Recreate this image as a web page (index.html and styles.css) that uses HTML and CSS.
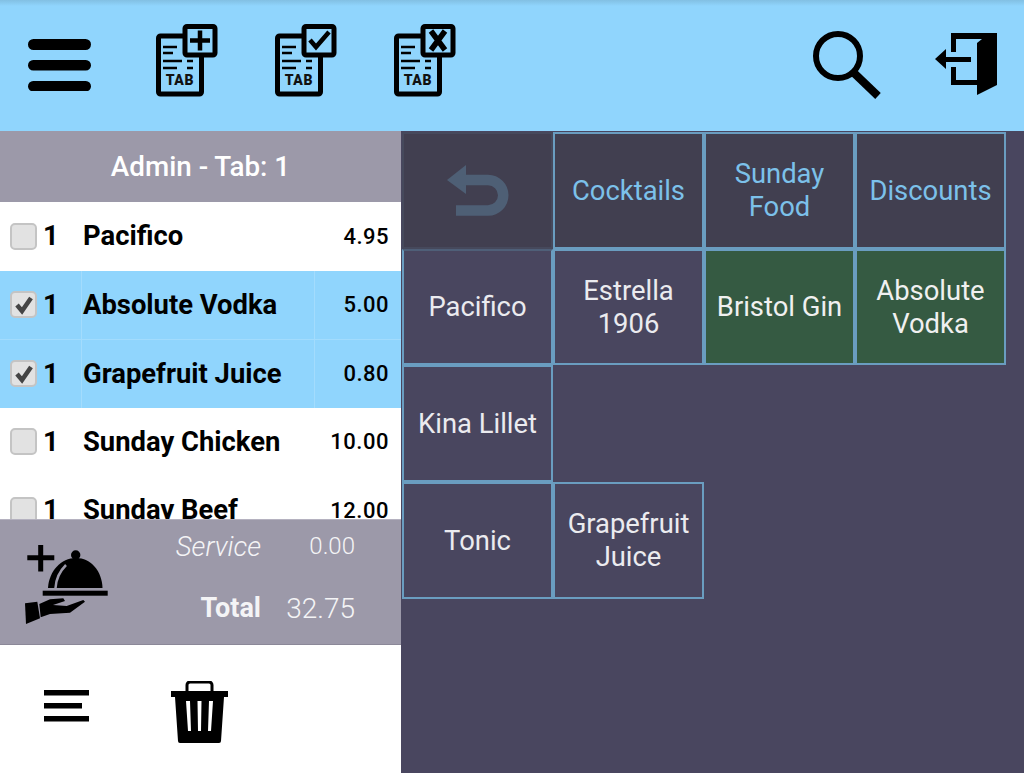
FILE: index.html
```html
<!DOCTYPE html>
<html lang="en">
<head>
  <meta charset="UTF-8" />
  <meta name="viewport" content="width=device-width, initial-scale=1" />
  <title>Tab 1</title>
  <link rel="stylesheet" href="styles.css">
</head>
<body>
  <header class="topbar">
    <svg class="icon-menu" width="63" height="52" viewBox="0 0 63 52" aria-label="Menu">
      <rect x="0" y="0" width="63" height="11" rx="5.5"/>
      <rect x="0" y="21" width="63" height="10.500" rx="5.2"/>
      <rect x="0" y="42" width="63" height="10.500" rx="5.2"/>
    </svg>

    <div class="tab-tools">
      <svg class="icon-tab" width="62" height="73" viewBox="0 0 62 73" aria-label="New tab">
        <rect class="tab-doc" x="2.500" y="12" width="43" height="58" rx="2"/>
        <path class="tab-lines" d="M7 23h14M7 29h10M7 37h19M31 37h6M7 44h14M31 44h6"/>
        <text class="tab-word" x="24" y="61">TAB</text>
        <rect class="tab-box" x="29" y="2.500" width="30" height="28.500" rx="2"/>
        <path class="tab-mark" d="M44 6.500v20M34 16.500h20"/>
      </svg>
      <svg class="icon-tab" width="62" height="73" viewBox="0 0 62 73" aria-label="Close tab">
        <rect class="tab-doc" x="2.500" y="12" width="43" height="58" rx="2"/>
        <path class="tab-lines" d="M7 23h14M7 29h10M7 37h19M31 37h6M7 44h14M31 44h6"/>
        <text class="tab-word" x="24" y="61">TAB</text>
        <rect class="tab-box" x="29" y="2.500" width="30" height="28.500" rx="2"/>
        <path class="tab-mark" d="M35 16l6 7L54 8"/>
      </svg>
      <svg class="icon-tab" width="62" height="73" viewBox="0 0 62 73" aria-label="Void tab">
        <rect class="tab-doc" x="2.500" y="12" width="43" height="58" rx="2"/>
        <path class="tab-lines" d="M7 23h14M7 29h10M7 37h19M31 37h6M7 44h14M31 44h6"/>
        <text class="tab-word" x="24" y="61">TAB</text>
        <rect class="tab-box" x="29" y="2.500" width="30" height="28.500" rx="2"/>
        <path class="tab-mark tab-mark-x" d="M37 7l14 19M51 7L37 26"/>
      </svg>
    </div>

    <svg class="icon-search" width="70" height="70" viewBox="0 0 70 70" aria-label="Search">
      <circle cx="26" cy="26" r="22" fill="none" stroke="#000" stroke-width="6"/>
      <path d="M42 43l24 23" fill="none" stroke="#000" stroke-width="8"/>
    </svg>
    <svg class="icon-exit" width="63" height="63" viewBox="0 0 63 63" aria-label="Log out">
      <path d="M16 0H62V6H21V19H16zM16 34H21V47H42V52H16z"/>
      <path d="M47 6L42 10V62L62 52V0z"/>
      <path d="M0 26L11 16V24H36V29H11V36z"/>
    </svg>
  </header>

  <main class="layout">
    <section class="order">
      <h2 class="order-title">Admin - Tab: 1</h2>

      <div class="order-list">
        <div class="order-row">
          <div class="col-qty"><span class="check"></span><span class="qty">1</span></div>
          <div class="col-name">Pacifico</div>
          <div class="col-price">4.95</div>
        </div>
        <div class="order-row selected">
          <div class="col-qty">
            <span class="check">
              <svg width="20" height="20" viewBox="0 0 20 20"><path d="M3 10l5 6L17 3" fill="none" stroke="#444" stroke-width="4.500"/></svg>
            </span>
            <span class="qty">1</span>
          </div>
          <div class="col-name">Absolute Vodka</div>
          <div class="col-price">5.00</div>
        </div>
        <div class="order-row selected">
          <div class="col-qty">
            <span class="check">
              <svg width="20" height="20" viewBox="0 0 20 20"><path d="M3 10l5 6L17 3" fill="none" stroke="#444" stroke-width="4.500"/></svg>
            </span>
            <span class="qty">1</span>
          </div>
          <div class="col-name">Grapefruit Juice</div>
          <div class="col-price">0.80</div>
        </div>
        <div class="order-row">
          <div class="col-qty"><span class="check"></span><span class="qty">1</span></div>
          <div class="col-name">Sunday Chicken</div>
          <div class="col-price">10.00</div>
        </div>
        <div class="order-row">
          <div class="col-qty"><span class="check"></span><span class="qty">1</span></div>
          <div class="col-name">Sunday Beef</div>
          <div class="col-price">12.00</div>
        </div>
      </div>

      <div class="summary">
        <svg class="icon-service" width="83" height="82" viewBox="0 0 83 82" aria-label="Add service">
          <path d="M15.700 2v26.500M2.300 14.700h27" fill="none" stroke="#000" stroke-width="5"/>
          <circle cx="50.700" cy="12" r="4.700"/>
          <path d="M23 45C24 28 36 15 51 15C66 15 77 28 77.500 45z"/>
          <path d="M30.500 45C31 36 35 28 41 22" fill="none" stroke="#9c99a9" stroke-width="2.500"/>
          <rect x="17.700" y="47.700" width="65" height="5"/>
          <path d="M0 60.300L12.300 58.700L15 75.300L1 81z"/>
          <path d="M14.300 61L25 56.300L38.300 55.300L40 58L28 62L41.700 63L58.300 57L60 58.700L45 69.700L25 71L15.700 74.300z"/>
        </svg>
        <div class="summary-lines">
          <div class="summary-line">
            <span class="label-service">Service</span>
            <span class="value-service">0.00</span>
          </div>
          <div class="summary-line">
            <span class="label-total">Total</span>
            <span class="value-total">32.75</span>
          </div>
        </div>
      </div>

      <div class="order-tools">
        <svg class="tool-lines" width="45" height="32" viewBox="0 0 45 32" aria-label="Options">
          <rect x="0" y="0" width="45" height="5.500"/>
          <rect x="0" y="13" width="38" height="5.500"/>
          <rect x="0" y="26" width="45" height="5.500"/>
        </svg>
        <svg class="tool-trash" width="57" height="62" viewBox="0 0 57 62" aria-label="Delete">
          <path d="M16 10V4a3 3 0 0 1 3-3h19a3 3 0 0 1 3 3v6" fill="none" stroke="#000" stroke-width="3"/>
          <path d="M0 10H57V16H53L50 60a2 2 0 0 1-2 2H9a2 2 0 0 1-2-2L4 16H0z"/>
          <path d="M15 20h4l1 30h-3zM26.500 20h4l-.500 30h-3zM38 20h4l-2 30h-3z" fill="#fff"/>
        </svg>
      </div>
    </section>

    <section class="buttons">
      <button class="pad pad-back" aria-label="Back">
        <svg width="62" height="52" viewBox="0 0 62 52">
          <path d="M0 15L19 0V29z" fill="#4e5f75"/>
          <path d="M15 15H41a15.250 15.250 0 0 1 0 30.500H9" fill="none" stroke="#4e5f75" stroke-width="10.500"/>
        </svg>
      </button>
      <button class="pad pad-cat">Cocktails</button>
      <button class="pad pad-cat">Sunday Food</button>
      <button class="pad pad-cat">Discounts</button>

      <button class="pad pad-first">Pacifico</button>
      <button class="pad">Estrella 1906</button>
      <button class="pad pad-green">Bristol Gin</button>
      <button class="pad pad-green">Absolute Vodka</button>

      <button class="pad">Kina Lillet</button>
      <div></div><div></div><div></div>

      <button class="pad">Tonic</button>
      <button class="pad">Grapefruit Juice</button>
    </section>
  </main>
</body>
</html>
```

FILE: styles.css
```css
* {
  box-sizing: border-box;
}
html, body {
  height: 100%;
}
body {
  margin: 0;
  height: 773px;
  overflow: hidden;
  font-family: Roboto, "Liberation Sans", sans-serif;
  background: #49465f;
  color: #000;
  display: flex;
  flex-direction: column;
}

/* Top bar */
.topbar {
  height: 131px;
  flex: none;
  display: flex;
  align-items: center;
  padding: 0 26px 2px 28px;
  background: linear-gradient(#82c0e3 0, #90d5fd 6px);
}
.icon-menu {
  flex: none;
}
.tab-tools {
  display: flex;
  gap: 57px;
  margin: 0 0 9px 65px;
}
.icon-search {
  margin-left: auto;
}
.icon-exit {
  margin-left: 53px;
}
.tab-doc, .tab-box {
  fill: #90d5fd;
  stroke: #000;
  stroke-width: 5;
}
.tab-lines {
  fill: none;
  stroke: #000;
  stroke-width: 2.500;
}
.tab-mark {
  fill: none;
  stroke: #000;
  stroke-width: 4.500;
}
.tab-mark-x {
  stroke-width: 5.500;
}
.tab-word {
  font-family: Roboto, "Liberation Sans", sans-serif;
  font-size: 14px;
  font-weight: 900;
  letter-spacing: 0.7px;
  text-anchor: middle;
  fill: #111;
}

.layout {
  flex: 1;
  display: flex;
  min-height: 0;
}

/* Order panel */
.order {
  width: 401px;
  flex: none;
  display: flex;
  flex-direction: column;
  background: #fff;
}
.order-title {
  margin: 0;
  height: 71px;
  flex: none;
  display: flex;
  align-items: center;
  justify-content: center;
  background: #9c99a9;
  color: #fff;
  font-size: 27.800px;
  font-weight: 500;
}
.order-list {
  height: 317px;
  flex: none;
  overflow: hidden;
}
.order-row {
  height: 68.500px;
  display: grid;
  grid-template-columns: 81px 233px 87px;
  align-items: stretch;
  font-size: 27.400px;
  font-weight: 700;
}
.order-row > div {
  display: flex;
  align-items: center;
}
.order-row.selected {
  background: #90d5fd;
}
.order-row.selected > div + div {
  border-left: 1px solid #a3dcfd;
}
.order-row.selected + .order-row.selected {
  border-top: 1px solid #a3dcfd;
}
.col-qty {
  padding-left: 10px;
  gap: 6px;
}
.col-name {
  padding-left: 2px;
}
.selected .col-name {
  padding-left: 1px;
}
.col-price {
  justify-content: flex-end;
  padding-right: 12px;
  font-size: 22px;
  font-weight: 500;
  letter-spacing: 0.5px;
}
.check {
  width: 27px;
  height: 27px;
  flex: none;
  display: flex;
  align-items: center;
  justify-content: center;
  background: #e2e2e2;
  border: 2px solid #c4c4c4;
  border-radius: 5px;
}

.summary {
  height: 126px;
  flex: none;
  display: flex;
  background: #9c99a9;
  border-top: 1px solid #b5b2c0;
  border-bottom: 1px solid #8b8898;
  color: #f4f4f6;
}
.icon-service {
  flex: none;
  margin: 23px 0 0 25px;
}
.summary-lines {
  flex: 1;
  padding: 8px 46px 0 0;
  display: flex;
  flex-direction: column;
  gap: 26px;
}
.summary-line {
  display: flex;
  align-items: center;
  justify-content: flex-end;
  height: 36px;
}
.label-service, .label-total {
  width: 120px;
  text-align: right;
}
.label-service {
  font-size: 27.500px;
  font-style: italic;
  font-weight: 300;
}
.value-service {
  width: 94px;
  text-align: right;
  font-size: 24px;
  font-weight: 300;
}
.label-total {
  font-size: 27px;
  font-weight: 700;
}
.value-total {
  width: 94px;
  text-align: right;
  font-size: 28px;
  font-weight: 300;
}

.order-tools {
  flex: 1;
  display: flex;
  align-items: center;
  gap: 82px;
  padding: 0 0 0 44px;
  background: #fff;
}
.tool-lines {
  margin-bottom: 7px;
}
.tool-trash {
  margin-top: 5px;
}

/* Button grid */
.buttons {
  flex: 1;
  display: grid;
  grid-template-columns: repeat(4, 151px);
  grid-auto-rows: 116.670px;
  align-content: start;
  padding: 1px 0 0 1px;
  background: #49465f;
}
.pad {
  padding: 8px 8px 6px;
  border: 2px solid #6a9dc0;
  background: #49465f;
  color: #ebebef;
  font-family: inherit;
  font-size: 27.400px;
  line-height: 33px;
  text-align: center;
}
.pad-cat {
  background: #413f50;
  color: #7cc1ea;
}
.pad-back {
  display: flex;
  align-items: center;
  justify-content: center;
  background: #413f50;
  border-color: #46495c;
}
.pad-first {
  border-top-color: #4f5f78;
}
.pad-green {
  background: #355a42;
  color: #f0f0f0;
}
```
